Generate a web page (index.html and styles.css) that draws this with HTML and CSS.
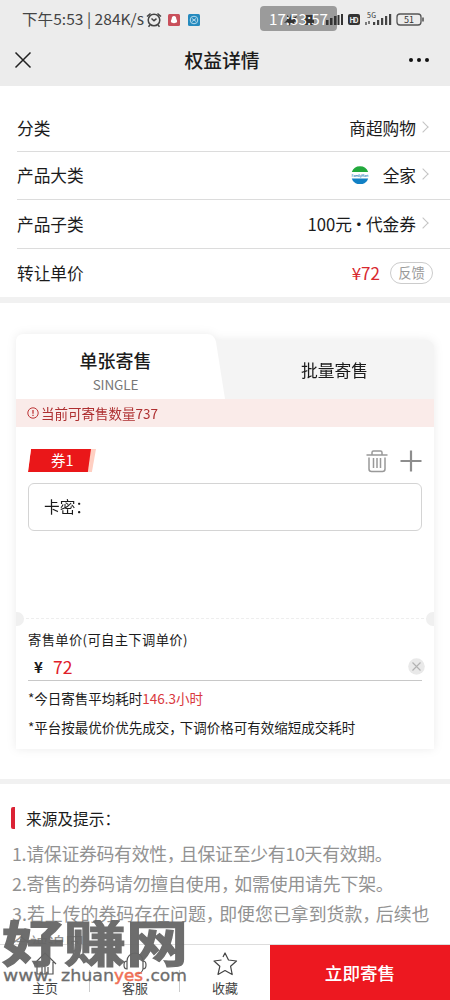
FILE: index.html
```html
<!DOCTYPE html>
<html lang="zh-CN">
<head>
<meta charset="utf-8">
<title>权益详情</title>
<link rel="stylesheet" href="styles.css">
</head>
<body>
<div class="app">
  <header class="top">
    <div class="status">
      <svg width="450" height="38" viewBox="0 0 450 38">
        <text x="22" y="25" font-size="15" fill="#444" textLength="122" lengthAdjust="spacingAndGlyphs">下午5:53 | 284K/s</text>
        <g fill="none" stroke="#444" stroke-width="1.5"><circle cx="154" cy="20" r="5.8"/><path d="M151.500 18.500l2.500 2.200 2.500-2M147 16.500l3.500-3M161 16.500l-3.500-3M150 25l-1.500 1.800M158 25l1.500 1.800"/></g>
        <rect x="168" y="14" width="12" height="12" rx="1.500" fill="#c9505b"/><path d="M174 16c-1.800 0-2.300 1.500-2.300 3-.6 1-1 2-.7 3 .8 1.500 5.200 1.500 6 0 .3-1-.1-2-.7-3 0-1.500-.5-3-2.300-3z" fill="#fff"/>
        <rect x="188" y="14" width="12" height="12" rx="1.500" fill="#258abe"/><g fill="none" stroke="#c5e2f1" stroke-width=".9"><circle cx="194" cy="20" r="3.800"/><path d="M192 18.500l4 3m0-3l-4 3"/></g>
        <rect x="260" y="6" width="77" height="25" rx="4" fill="#9b9b9b"/>
        <g fill="#333"><path d="M287 15l3 3 1-4 2 4 4-2-2 4 3 1-4 1 1 3-4-2-2 3-1-4-4 1 3-3z"/><rect x="304" y="15" width="10" height="10" rx="1"/><rect x="326" y="20" width="2.500" height="5"/><rect x="330" y="18" width="2.500" height="7"/><rect x="334" y="16" width="2.500" height="9"/><rect x="337.500" y="15" width="2" height="10"/><rect x="341" y="14" width="2" height="11"/><rect x="348" y="14" width="12" height="11" rx="2"/></g>
        <text x="269" y="25" font-size="15" fill="#fff" textLength="59" lengthAdjust="spacingAndGlyphs">17:53:57</text>
        <text x="349.500" y="22.500" font-size="7" font-weight="700" fill="#eee" textLength="9">HD</text>
        <text x="367" y="18" font-size="7" fill="#333" textLength="9">5G</text>
        <path d="M366 22v3M369 21v3" stroke="#555" stroke-width="1.500"/>
        <g fill="#444"><rect x="373" y="22" width="2.200" height="3"/><rect x="377" y="20" width="2.200" height="5"/><rect x="381" y="18" width="2.200" height="7"/><rect x="385" y="16" width="2.200" height="9"/><rect x="389" y="14" width="2.200" height="11"/></g>
        <rect x="397" y="14" width="24" height="11" rx="3" fill="none" stroke="#555" stroke-width="1.300"/><path d="M423 17.500v4" stroke="#555" stroke-width="1.600"/>
        <text x="404" y="23" font-size="9" fill="#333" textLength="10">51</text>
      </svg>
    </div>
    <nav class="nav">
      <svg class="close" width="18" height="18" viewBox="0 0 18 18"><path d="M1.500 1.500l15 15M16.500 1.500l-15 15" stroke="#222" stroke-width="1.500" fill="none"/></svg>
      <h1 class="title">权益详情</h1>
      <svg class="more" width="22" height="6" viewBox="0 0 22 6" fill="#111"><circle cx="3" cy="3" r="2"/><circle cx="11" cy="3" r="2"/><circle cx="19" cy="3" r="2"/></svg>
    </nav>
  </header>

  <section class="rows">
    <div class="row first"><span>分类</span><span class="value">商超购物<i class="chev"></i></span></div>
    <div class="row"><span>产品大类</span><span class="value">
      <svg class="brand" width="18" height="18" viewBox="0 0 18 18"><path d="M.8 6a8.700 8.700 0 0 1 16.400 0z" fill="#22a93c"/><path d="M.8 12.500a8.700 8.700 0 0 0 16.400 0z" fill="#1180c5"/><text x=".5" y="10.500" font-size="3.600" font-weight="500" fill="#2582b9" textLength="17">FamilyMart</text></svg>全家<i class="chev"></i></span></div>
    <div class="row"><span>产品子类</span><span class="value">100元<span class="dot">·</span>代金券<i class="chev"></i></span></div>
    <div class="row last"><span>转让单价</span><span class="value"><b class="price">¥72</b><span class="pill">反馈</span></span></div>
  </section>

  <section class="card">
    <div class="upper">
      <div class="tabs">
        <div class="tab active"><strong>单张寄售</strong><small>SINGLE</small></div>
        <div class="tab other">批量寄售</div>
      </div>
      <div class="notice">
        <svg width="12" height="12" viewBox="0 0 12 12"><circle cx="6" cy="6" r="5.200" fill="none" stroke="#bd3536" stroke-width="1"/><path d="M6 3v3.800M6 7.800v1.200" stroke="#bd3536" stroke-width="1.300"/></svg>
        <span>当前可寄售数量737</span>
      </div>
      <div class="coupon">
        <div class="ticket"><span class="ticket-face">券1</span></div>
        <div class="tools">
          <svg width="22" height="24" viewBox="0 0 22 24" fill="none" stroke="#999" stroke-width="1.500"><path d="M.5 6h21M6 6V3.500Q6 2 7.500 2h7Q16 2 16 3.500V6M3 8.500V20q0 2.500 2.500 2.500h11Q19 22.500 19 20V8.500M7.500 9v10M11 9v10M14.500 9v10"/></svg>
          <svg width="22" height="22" viewBox="0 0 22 22"><path d="M11 .5v21M.5 11h21" stroke="#8d8d8d" stroke-width="2.200"/></svg>
        </div>
      </div>
      <div class="field">卡密：</div>
    </div>
    <div class="lower">
      <i class="notch left"></i><i class="notch right"></i>
      <div class="label">寄售单价(可自主下调单价)</div>
      <div class="amount"><span class="yen">¥</span><span class="num">72</span>
        <svg width="17" height="17" viewBox="0 0 17 17"><circle cx="8.500" cy="8.500" r="8.300" fill="#e9e9e9"/><path d="M4.500 4.500l8 8m0-8l-8 8" stroke="#b2b2b2" stroke-width="1.100"/></svg>
      </div>
      <p class="hint">*今日寄售平均耗时<em>146.3小时</em></p>
      <p class="hint second">*平台按最优价优先成交<span class="comma">，</span>下调价格可有效缩短成交耗时</p>
    </div>
  </section>

  <section class="tips">
    <h2 class="tips-title">来源及提示：</h2>
    <div class="tips-body">
      <p class="tight">1.请保证券码有效性<span class="comma">，</span>且保证至少有10天有效期。</p>
      <p class="snug">2.寄售的券码请勿擅自使用<span class="comma">，</span>如需使用请先下架。</p>
      <p>3.若上传的券码存在问题<span class="comma">，</span>即便您已拿到货款<span class="comma">，</span>后续也</p>
      <p>会被追回。</p>
    </div>
  </section>

  <footer class="bar">
    <div class="item"><svg width="26" height="26" viewBox="0 0 26 26" fill="none" stroke="#555" stroke-width="1.200"><path d="M2 13L13 2l11 11M5 11v12h16V11M10 23v-7M13 23v-7M16 23v-7"/></svg><span>主页</span></div>
    <div class="item"><svg width="26" height="26" viewBox="0 0 26 26" fill="none" stroke="#555" stroke-width="1.200"><path d="M5 10a8 8 0 0 1 16 0M5 10q-3 0-3 4t3 4zM21 10q3 0 3 4t-3 4zM21 18q-1 5-7 5"/></svg><span>客服</span></div>
    <div class="item"><svg width="26" height="26" viewBox="0 0 26 26" fill="none" stroke="#444" stroke-width="1.200" stroke-linejoin="round"><path d="M9.500 9L2 10l5.800 5.300L6 23.500l7-4 7.200 4-1.600-8.200L24.500 10l-8-1L13 2l-2 4"/></svg><span>收藏</span></div>
    <div class="submit">立即寄售</div>
  </footer>

  <svg class="mark" width="192" height="72" viewBox="0 0 192 72">
    <text transform="translate(2 42) scale(1 .82)" x="0" y="0" font-size="61" font-weight="700" fill="#666" stroke="#666" stroke-width="1.500" textLength="186" lengthAdjust="spacingAndGlyphs">好赚网</text>
    <g class="wide" font-size="16.500" fill="#666" stroke="#666" stroke-width=".3"><text x="3" y="61" textLength="50" lengthAdjust="spacingAndGlyphs">www.</text><text x="61" y="61" textLength="53" lengthAdjust="spacingAndGlyphs">zhuan</text><text x="114" y="61" fill="#f0684c" stroke="#f0684c" stroke-width=".5" textLength="29" lengthAdjust="spacingAndGlyphs">yes</text><text x="145" y="61" textLength="42" lengthAdjust="spacingAndGlyphs">.com</text></g>
  </svg>
</div>
</body>
</html>
```
FILE: styles.css
```css
* { box-sizing: border-box; }
body, h1, h2, p { margin: 0; font-weight: 400; }
body { background: #fff; color: #1b1b1b; font-family: "Noto Sans CJK SC", sans-serif; }
svg { display: block; flex: none; }
.app { position: relative; width: 450px; height: 1000px; overflow: hidden; display: flex; flex-direction: column; }

.top { height: 86px; background: #ececec; flex: none; }
.status { height: 38px; }
.nav { height: 44px; display: grid; grid-template-columns: 60px 1fr 60px; align-items: center; padding: 0 20px 0 14px; }
.title { font-size: 18.800px; font-weight: 500; text-align: center; line-height: 28px; }
.more { justify-self: end; }

.rows { height: 217px; border-bottom: 6px solid #f1f1f1; flex: none; }
.row { height: 48.500px; margin-left: 17px; padding-right: 17px; display: flex; justify-content: space-between; align-items: center; font-size: 16.700px; border-bottom: 1px solid #dcdcdc; }
.row.first { height: 65.500px; padding-top: 19px; }
.row.last { border: 0; height: 48px; }
.value { display: flex; align-items: center; }
.brand { margin-right: 14px; }
.dot { width: 14px; display: flex; justify-content: center; }
.chev { width: 8px; height: 8px; margin: 0 6px 2px 3px; border: solid #c4c4c4; border-width: 1px 1px 0 0; transform: rotate(45deg); }
.price { color: #d8292f; font-weight: 400; font-size: 17px; margin-right: 10px; }
.pill { width: 43px; height: 22px; border: 1px solid #ccc; border-radius: 11px; color: #999; font-size: 13.300px; line-height: 20px; text-align: center; }

.card { margin: 31px 16px 0; height: 415px; flex: none; filter: drop-shadow(0 0 5px rgba(0,0,0,.08)); }
.upper { height: 284px; background: linear-gradient(#fff, #fff) 0 65px no-repeat; }
.tabs { display: flex; height: 65px; align-items: flex-end; }
.tab { display: flex; flex-direction: column; align-items: center; }
.active { width: 210px; height: 65px; background: #fff; clip-path: path("M0 8Q0 0 8 0H191Q198 0 200 8L209 65H0Z"); padding: 13px 11px 0 0; position: relative; z-index: 1; }
.active strong { font-size: 18px; font-weight: 500; line-height: 27px; }
.active small { font-size: 13.500px; line-height: 20px; color: #777; letter-spacing: -.1px; }
.other { flex: 1; height: 59px; margin-left: -12px; padding: 0 0 0 21px; background: #f4f4f4; border-top-right-radius: 8px; justify-content: center; font-size: 16.800px; }
.notice { height: 28px; background: #faebe9; display: flex; align-items: center; gap: 2px; padding-left: 11px; color: #ae2f30; font-size: 13.500px; }
.coupon { display: flex; justify-content: space-between; align-items: center; height: 57px; padding: 10px 12px 0; }
.ticket { width: 68px; height: 23px; background: #ffcfc2; clip-path: polygon(3px 0, 100% 0, 94% 100%, 0 100%); }
.ticket-face { display: block; width: 63px; height: 23px; background: #ea1719; clip-path: polygon(3px 0, 100% 0, 95% 100%, 0 100%); color: #fff; font-size: 14.500px; line-height: 22px; padding-left: 23px; }
.tools { display: flex; align-items: center; gap: 12px; }
.field { margin: -1px 12px 0; height: 48px; border: 1px solid #d4d4d4; border-radius: 6px; padding-left: 15px; line-height: 46px; font-size: 15.700px; }
.lower { position: relative; height: 131px; background: #fff; border-top: 1px dashed #eee; padding: 9px 12px 0; }
.notch { position: absolute; top: -7px; width: 8px; height: 14px; background: #f0f0f0; }
.notch.left { left: 0; border-radius: 0 8px 8px 0; }
.notch.right { right: 0; border-radius: 8px 0 0 8px; }
.label { font-size: 13.300px; line-height: 24px; letter-spacing: .35px; }
.amount { height: 29px; border-bottom: 1px solid #c8c8c8; display: flex; align-items: center; padding-left: 6px; }
.yen { width: 19px; font-size: 15px; font-weight: 700; }
.num { flex: 1; color: #df202b; font-size: 17.500px; }
.amount svg { margin-right: -3px; }
.hint { font-size: 13.500px; line-height: 20px; margin-top: 7px; white-space: nowrap; }
.hint em { color: #d9383d; font-style: normal; }
.hint.second { margin-top: 9px; }
.hint .comma { margin-right: -3px; }

.tips { margin-top: 30px; border-top: 5px solid #f1f1f1; padding: 23px 0 0 11px; flex: none; }
.tips-title { border-left: 4px solid #db2335; border-radius: 2px; height: 22px; padding-left: 11px; font-size: 15.700px; line-height: 23px; font-weight: 400; }
.tips-body { margin-top: 9px; color: #929292; font-size: 17.900px; font-weight: 400; line-height: 30px; white-space: nowrap; padding-left: 1px; }
.tips-body .tight { letter-spacing: -.32px; }
.tips-body .snug { letter-spacing: -.2px; }
.tips-body .comma { margin-right: -4.500px; }

.bar { position: absolute; left: 0; right: 0; bottom: 0; height: 56px; display: grid; grid-template-columns: 90px 90px 90px 1fr; background: #fff; border-top: 1px solid #ddd; }
.item { display: flex; flex-direction: column; align-items: center; padding-top: 6px; font-size: 13px; line-height: 18px; color: #444; gap: 2px; }
.item:nth-child(-n+2) { background: linear-gradient(#ccc, #ccc) right 25px / 1px 22px no-repeat; }
.submit { background: #ed1820; color: #fff; font-size: 17.600px; font-weight: 500; line-height: 56px; text-align: center; }
.mark { position: absolute; left: 0; top: 920px; opacity: .95; }
.wide { font-family: "DejaVu Sans", sans-serif; }
```
